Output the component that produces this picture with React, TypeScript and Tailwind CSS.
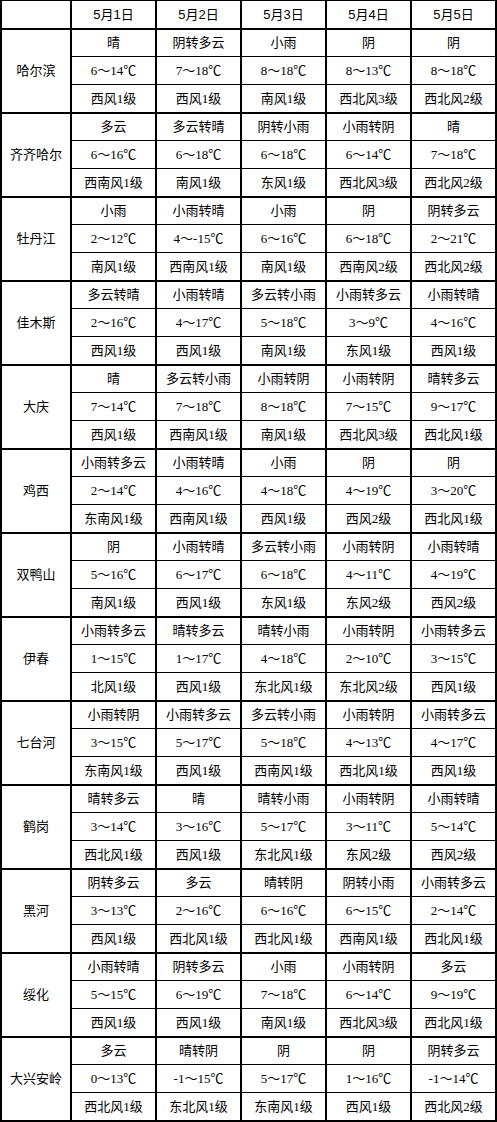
import React from 'react'

type City = {
  name: string
  weather: string[]
  temp: string[]
  wind: string[]
}

const days = ['5月1日', '5月2日', '5月3日', '5月4日', '5月5日']

const cities: City[] = [
  {
    name: '哈尔滨',
    weather: ['晴', '阴转多云', '小雨', '阴', '阴'],
    temp: ['6～14℃', '7～18℃', '8～18℃', '8～13℃', '8～18℃'],
    wind: ['西风1级', '西风1级', '南风1级', '西北风3级', '西北风2级'],
  },
  {
    name: '齐齐哈尔',
    weather: ['多云', '多云转晴', '阴转小雨', '小雨转阴', '晴'],
    temp: ['6～16℃', '6～18℃', '6～18℃', '6～14℃', '7～18℃'],
    wind: ['西南风1级', '南风1级', '东风1级', '西北风3级', '西北风2级'],
  },
  {
    name: '牡丹江',
    weather: ['小雨', '小雨转晴', '小雨', '阴', '阴转多云'],
    temp: ['2～12℃', '4～-15℃', '6～16℃', '6～18℃', '2～21℃'],
    wind: ['南风1级', '西南风1级', '南风1级', '西南风2级', '西北风2级'],
  },
  {
    name: '佳木斯',
    weather: ['多云转晴', '小雨转晴', '多云转小雨', '小雨转多云', '小雨转晴'],
    temp: ['2～16℃', '4～17℃', '5～18℃', '3～9℃', '4～16℃'],
    wind: ['西风1级', '西风1级', '南风1级', '东风1级', '西风1级'],
  },
  {
    name: '大庆',
    weather: ['晴', '多云转小雨', '小雨转阴', '小雨转阴', '晴转多云'],
    temp: ['7～14℃', '7～18℃', '8～18℃', '7～15℃', '9～17℃'],
    wind: ['西风1级', '西南风1级', '南风1级', '西北风3级', '西北风1级'],
  },
  {
    name: '鸡西',
    weather: ['小雨转多云', '小雨转晴', '小雨', '阴', '阴'],
    temp: ['2～14℃', '4～16℃', '4～18℃', '4～19℃', '3～20℃'],
    wind: ['东南风1级', '西南风1级', '西风1级', '西风2级', '西北风1级'],
  },
  {
    name: '双鸭山',
    weather: ['阴', '小雨转晴', '多云转小雨', '小雨转阴', '小雨转晴'],
    temp: ['5～16℃', '6～17℃', '6～18℃', '4～11℃', '4～19℃'],
    wind: ['南风1级', '西风1级', '东风1级', '东风2级', '西风2级'],
  },
  {
    name: '伊春',
    weather: ['小雨转多云', '晴转多云', '晴转小雨', '小雨转阴', '小雨转多云'],
    temp: ['1～15℃', '1～17℃', '4～18℃', '2～10℃', '3～15℃'],
    wind: ['北风1级', '西风1级', '东北风1级', '东北风2级', '西风1级'],
  },
  {
    name: '七台河',
    weather: ['小雨转阴', '小雨转多云', '多云转小雨', '小雨转阴', '小雨转多云'],
    temp: ['3～15℃', '5～17℃', '5～18℃', '4～13℃', '4～17℃'],
    wind: ['东南风1级', '西风1级', '西南风1级', '西北风1级', '西风1级'],
  },
  {
    name: '鹤岗',
    weather: ['晴转多云', '晴', '晴转小雨', '小雨转阴', '小雨转晴'],
    temp: ['3～14℃', '3～16℃', '5～17℃', '3～11℃', '5～14℃'],
    wind: ['西北风1级', '西风1级', '东北风1级', '东风2级', '西风2级'],
  },
  {
    name: '黑河',
    weather: ['阴转多云', '多云', '晴转阴', '阴转小雨', '小雨转多云'],
    temp: ['3～13℃', '2～16℃', '6～16℃', '6～15℃', '2～14℃'],
    wind: ['西风1级', '西北风1级', '西北风1级', '西南风1级', '西北风1级'],
  },
  {
    name: '绥化',
    weather: ['小雨转晴', '阴转多云', '小雨', '小雨转阴', '多云'],
    temp: ['5～15℃', '6～19℃', '7～18℃', '6～14℃', '9～19℃'],
    wind: ['西风1级', '西风1级', '南风1级', '西北风3级', '西北风1级'],
  },
  {
    name: '大兴安岭',
    weather: ['多云', '晴转阴', '阴', '阴', '阴转多云'],
    temp: ['0～13℃', '-1～15℃', '5～17℃', '1～16℃', '-1～14℃'],
    wind: ['西北风1级', '东北风1级', '东南风1级', '西风1级', '西北风2级'],
  },
]

// thin lines between the three rows of a city, thick ones everywhere else
const cell = 'h-[28px] p-0 text-center align-middle border-black border-x-2'

export default function App() {
  return (
    <div className="w-[497px] bg-white text-black font-['Liberation_Serif','Noto_Sans_CJK_SC',serif] text-[13px] leading-none">
      <table className="table-fixed border-collapse w-[497px]">
        <colgroup>
          <col className="w-[70px]" />
          {days.map((d) => (
            <col key={d} className="w-[85px]" />
          ))}
        </colgroup>
        <thead>
          <tr>
            <th className={`${cell} border-t border-b-2 font-normal`} />
            {days.map((d) => (
              <th key={d} className={`${cell} border-t border-b-2 font-normal font-['Liberation_Sans','Noto_Sans_CJK_SC',sans-serif]`}>
                {d}
              </th>
            ))}
          </tr>
        </thead>
        <tbody>
          {cities.map((c) => (
            <React.Fragment key={c.name}>
              <tr>
                <td rowSpan={3} className={`${cell} border-y-2`}>
                  {c.name}
                </td>
                {c.weather.map((w, i) => (
                  <td key={i} className={`${cell} border-t-2 border-b`}>
                    {w}
                  </td>
                ))}
              </tr>
              <tr>
                {c.temp.map((t, i) => (
                  <td key={i} className={`${cell} border-y`}>
                    {t}
                  </td>
                ))}
              </tr>
              <tr>
                {c.wind.map((w, i) => (
                  <td key={i} className={`${cell} border-t border-b-2`}>
                    {w}
                  </td>
                ))}
              </tr>
            </React.Fragment>
          ))}
        </tbody>
      </table>
    </div>
  )
}
